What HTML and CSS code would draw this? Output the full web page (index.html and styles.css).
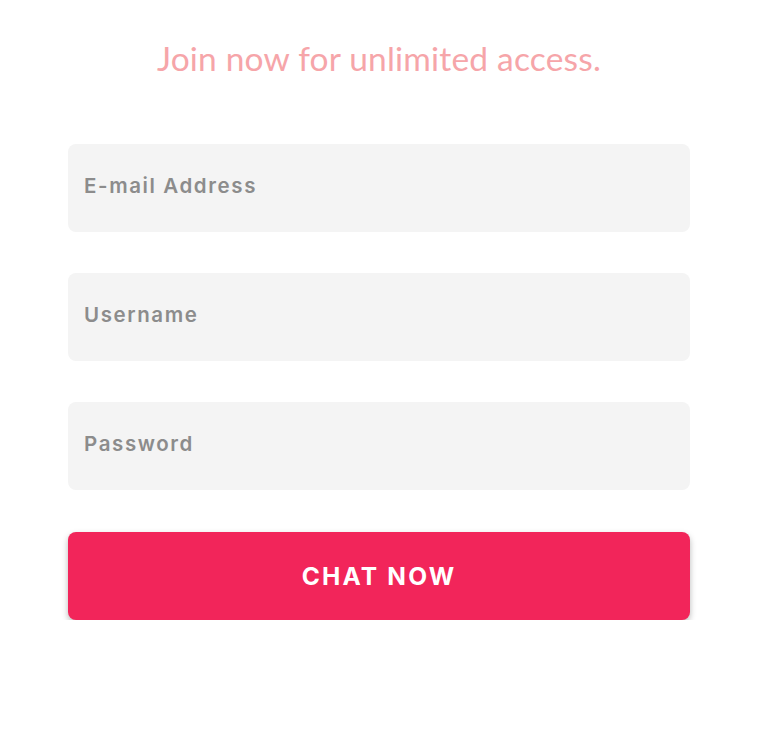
FILE: index.html
```html
<!DOCTYPE html>
<html lang="en">
<head>
    <meta charset="UTF-8">
    <meta name="viewport" content="width=device-width, initial-scale=1.0">
    <title>Join now</title>
    <link rel="stylesheet" href="styles.css">
</head>
<body>
    <div class="signup">
        <h1>Join now for unlimited access.</h1>

        <form class="signup-form" onsubmit="return false;">
            <input type="email" placeholder="E-mail Address">
            <input type="text" placeholder="Username">
            <input type="password" placeholder="Password">
            <button type="submit">CHAT NOW</button>
        </form>
    </div>
</body>
</html>
```

FILE: styles.css
```css
body {
    margin: 0;
    background-color: #ffffff;
    font-family: 'Lato', 'Liberation Sans', sans-serif;
}
.signup {
    width: 622px;
    margin-left: 68px;
    padding-top: 36px;
}
h1 {
    margin: 0 0 64px;
    text-align: center;
    font-family: 'Lato', sans-serif;
    font-weight: 400;
    font-size: 33.5px;
    line-height: 44px;
    letter-spacing: 0.2px;
    color: #f6a5a9;
}
.signup-form {
    display: flex;
    flex-direction: column;
    gap: 41px;
}
input {
    height: 88px;
    padding: 0 16px 5px;
    box-sizing: border-box;
    border: none;
    border-radius: 8px;
    background-color: #f4f4f4;
    font-family: 'Inter', sans-serif;
    font-weight: 600;
    font-size: 20.5px;
    letter-spacing: 1.6px;
    outline: none;
}
input::placeholder {
    color: #8c8c8c;
}
button {
    height: 88px;
    margin-top: 1px;
    padding-bottom: 2px;
    border: none;
    border-radius: 8px;
    background-color: #f2255a;
    color: #ffffff;
    font-family: 'Inter', sans-serif;
    font-weight: 700;
    font-size: 24.5px;
    letter-spacing: 2.2px;
    box-shadow: 0 3px 6px rgba(0, 0, 0, 0.28);
    cursor: pointer;
}
```
